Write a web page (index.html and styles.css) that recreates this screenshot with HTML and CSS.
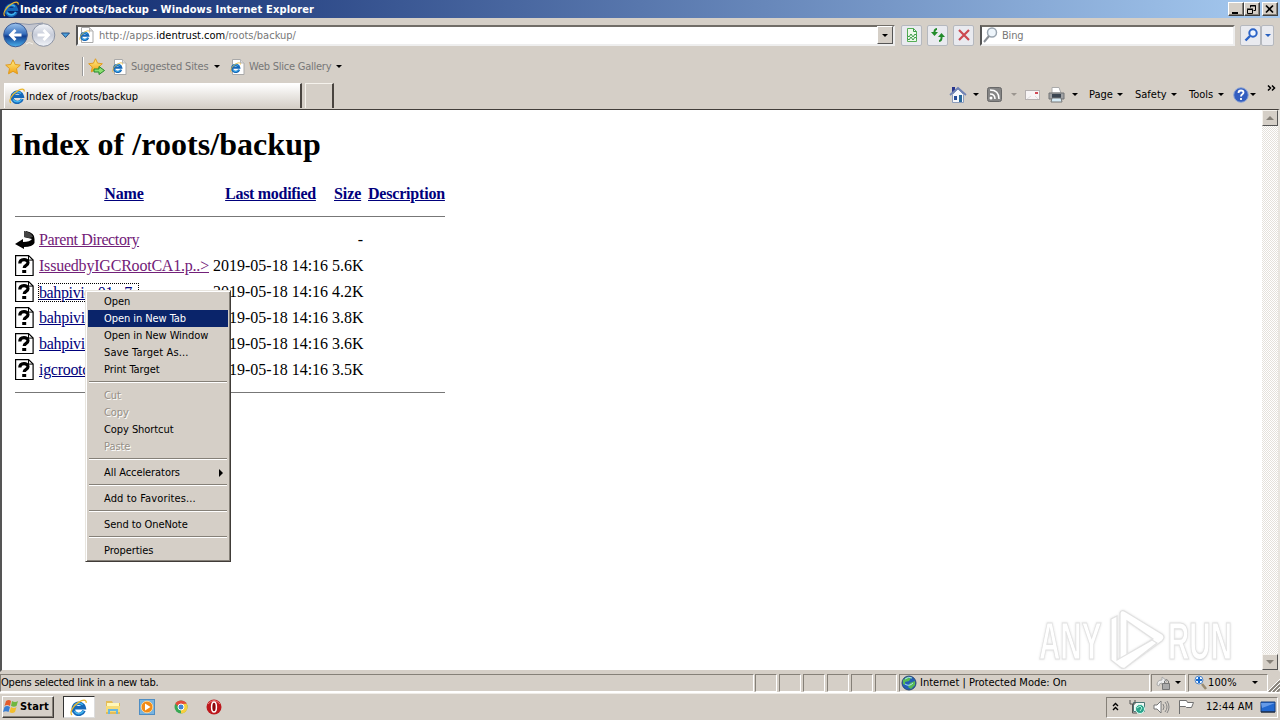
FILE: index.html
```html
<!DOCTYPE html>
<html lang="en">
<head>
<meta charset="utf-8">
<title>Index of /roots/backup</title>
<link rel="stylesheet" href="styles.css">
</head>
<body>
<svg class="defs" width="0" height="0" aria-hidden="true">
  <defs>
    <linearGradient id="blue" x1="0" y1="0" x2="0" y2="1"><stop offset="0" stop-color="#9cc4ee"/><stop offset=".45" stop-color="#3970bd"/><stop offset=".55" stop-color="#123f91"/><stop offset="1" stop-color="#4bb2ee"/></linearGradient>
    <linearGradient id="pale" x1="0" y1="0" x2="0" y2="1"><stop offset="0" stop-color="#f4f6fa"/><stop offset=".5" stop-color="#c6cbd8"/><stop offset="1" stop-color="#f2f5fa"/></linearGradient>
    <linearGradient id="gold" x1="0" y1="0" x2="0" y2="1"><stop offset="0" stop-color="#fff08a"/><stop offset="1" stop-color="#f2a010"/></linearGradient>
    <symbol id="ie" viewBox="0 0 16 16">
      <path d="M13.200 11A5.200 5.200 0 1 1 13.400 8.300H4.600" fill="none" stroke="#1668b8" stroke-width="3.300"/>
      <path d="M12.700 11A5 5 0 0 1 4 11.500M4 6.500a5 5 0 0 1 8-1" fill="none" stroke="#42b4ee" stroke-width="1.400"/>
      <path d="M1.800 15C-.8 12.400 3.200 6.200 8 3.200 12 .6 15.600.2 15.200 3.600" fill="none" stroke="#e9b52c" stroke-width="1.200"/>
    </symbol>
    <symbol id="iepage" viewBox="0 0 15 16">
      <path d="M2.500.5h8l3.500 3.500v11.500H2.500z" fill="#fff" stroke="#a9a9a9"/><path d="M10.500.5V4H14" fill="#ddd" stroke="#b5b5b5"/>
      <use href="#ie" x="0" y="3" width="11" height="11"/>
    </symbol>
    <symbol id="star" viewBox="0 0 16 16"><path d="M8 .8l2.200 4.700 5.100.6-3.800 3.500 1 5.200L8 12.300l-4.500 2.500 1-5.200L.7 6.100l5.100-.6z" fill="url(#gold)" stroke="#e09a1c"/></symbol>
    <symbol id="unk" viewBox="0 0 20 22">
      <path d="M.6 .6h13l4.500 4.500V20.500H.6z" fill="#fff" stroke="#000" stroke-width="1.200"/><path d="M13.500 .6v4.500h4.500" fill="none" stroke="#000"/>
      <path d="M4.800 8.500C4.800 3.500 13 3.500 13 7.800c0 2.700-3.800 2.500-3.800 5.200" fill="none" stroke="#000" stroke-width="3.200"/><path d="M7.200 15h4v3h-4z"/>
    </symbol>
  </defs>
</svg>

<div class="window">
  <header class="titlebar">
    <svg class="title-icon" width="16" height="16"><use href="#ie"/></svg>
    <span class="title-text">Index of /roots/backup - Windows Internet Explorer</span>
    <span class="winbtn"><svg width="12" height="11"><path d="M2 9h6" stroke="#000" stroke-width="2"/></svg></span>
    <span class="winbtn"><svg width="12" height="11"><path d="M4.500 3.500V1.500h5v5h-2M4 2h6M1.500 5.500h5v4h-5zM1 5h6" fill="none" stroke="#000"/></svg></span>
    <span class="winbtn close"><svg width="12" height="11"><path d="M2 1.500l7 7m0-7l-7 7" stroke="#000" stroke-width="1.700"/></svg></span>
  </header>

  <div class="navrow">
    <svg class="navbtns" width="74" height="30" viewBox="0 0 74 30">
      <path d="M15 3.500Q29 6 43 3.500V12H15z" fill="#c3c6d0"/><path d="M15 3Q29 6 43 3" stroke="#9099ae" fill="none"/><path d="M26 24q3-3 7 0" stroke="#f4f2ee" fill="none"/>
      <circle cx="15.500" cy="15" r="11.800" fill="url(#blue)" stroke="#3e5c94"/><path d="M21.500 15H11m4.500-5l-5 5 5 5" stroke="#fff" stroke-width="2.800" fill="none"/>
      <circle cx="43.500" cy="15" r="11.300" fill="url(#pale)" stroke="#8c93a3"/><path d="M37.500 15H48m-4.500-5l5 5-5 5" stroke="#fff" stroke-width="2.800" fill="none"/>
      <path d="M61.500 13h8l-4 4.500z" fill="#4da0da" stroke="#234e85"/>
    </svg>
    <div class="address"><svg width="15" height="16"><use href="#iepage"/></svg><span class="url">http://apps.<b>identrust.com</b>/roots/backup/</span><span class="drop"><i class="tri"></i></span></div>
    <span class="tool"><svg width="16" height="16"><path d="M3.500 1.500h6l3 3v10h-9z" fill="#edf8ea" stroke="#55ad55"/><path d="M9.500 1.500v3h3M3 8l2 2 2-3 2 3 2-3 2 2M3 11l2 2 2-3 2 3 2-3 2 2" fill="none" stroke="#3b9b46"/></svg></span>
    <span class="tool"><svg width="16" height="16"><path d="M7 2Q4 2 4.500 7M9 14q3 0 2.500-5" fill="none" stroke="#228b2a" stroke-width="2"/><path d="M1 5h7l-3.500 4zM8 10h7l-3.500-4z" fill="#228b2a"/></svg></span>
    <span class="tool"><svg width="16" height="16"><path d="M3 3l10 10m0-10L3 13" stroke="#cc4850" stroke-width="2.200"/></svg></span>
    <div class="search"><svg width="17" height="18"><circle cx="10" cy="6.500" r="4.500" fill="#eef5fb" stroke="#9aa5b0" stroke-width="1.500"/><path d="M7 10l-5 6" stroke="#8a8f96" stroke-width="2"/></svg><span class="bing">Bing</span></div>
    <span class="tool go"><svg width="16" height="16"><circle cx="10" cy="6" r="3.700" fill="#f0f6ff" stroke="#2b63c7" stroke-width="2"/><path d="M7 9l-4.500 4.500" stroke="#2b63c7" stroke-width="2.400"/></svg></span>
    <span class="tool more"><i class="tri bluetri"></i></span>
  </div>

  <div class="favrow">
    <svg width="16" height="16"><use href="#star"/></svg><span class="t fav">Favorites</span><i class="vsep"></i>
    <svg width="18" height="17" viewBox="0 0 18 17"><use href="#star" width="15" height="15"/><path d="M6 11h5V8.500l5.500 4-5.500 4V14H6z" fill="#8ade70" stroke="#258a2a"/></svg>
    <svg class="sp1" width="15" height="16"><use href="#iepage"/></svg><span class="t g sug">Suggested Sites</span><i class="tri"></i>
    <svg class="sp2" width="15" height="16"><use href="#iepage"/></svg><span class="t g web">Web Slice Gallery</span><i class="tri"></i>
  </div>

  <div class="tabrow">
    <div class="tab"><svg width="16" height="16"><use href="#ie"/></svg><span class="t tabt">Index of /roots/backup</span></div>
    <div class="newtab"></div>
    <div class="commands">
      <svg width="18" height="18"><path d="M3.500 8.500v8h11v-8L9 3z" fill="#f6f7fb" stroke="#8d9cba"/><path d="M3 1h3v5H3z" fill="#27348c"/><path d="M1 9l8-7 8 7" fill="none" stroke="#6f82b5" stroke-width="1.700"/><path d="M5 10h3v4H5z" fill="#274d99"/><path d="M10 9h3v7h-3z" fill="#2a6a9c"/></svg><i class="tri a1"></i>
      <svg class="rss" width="15" height="15"><rect x=".5" y=".5" width="14" height="14" rx="2" fill="#858585" stroke="#686868"/><path d="M3 7q5 0 5 5M3 3q9 0 9 9" fill="none" stroke="#fff" stroke-width="1.500"/><circle cx="4" cy="11" r="1.500" fill="#fff"/></svg><i class="tri a2"></i>
      <svg class="mail" width="15" height="12"><rect x=".5" y="1.500" width="14" height="9" fill="#f7f4f5" stroke="#b5b0b0"/><path d="M2 10l4-3M13 10l-3-3" stroke="#ddd"/><path d="M10 3h3v2h-3z" fill="#d14956"/></svg>
      <svg class="print" width="17" height="16"><path d="M4 6V.5h7l2 5.500z" fill="#fff" stroke="#aaa"/><path d="M1 6h15v6H1z" fill="#a0a2a5" stroke="#707274"/><path d="M4 7h9v4H4z" fill="#3c4652"/><path d="M4 11h9l1 4H3z" fill="#d7edf8" stroke="#777"/></svg><i class="tri a3"></i>
      <span class="t page">Page</span><i class="tri a4"></i><span class="t safety">Safety</span><i class="tri a5"></i><span class="t tools">Tools</span><i class="tri a6"></i>
      <svg class="help" width="16" height="16"><circle cx="8" cy="8" r="7.300" fill="#335ec0" stroke="#91a7d5"/><path d="M5.500 6c0-3.500 5-3 5-.5C10.500 7.500 8 7 8 9.500M8 11v2" fill="none" stroke="#fff" stroke-width="1.800"/></svg><i class="tri a7"></i>
      <svg class="chev" width="9" height="7"><path d="M1 .5l2.500 2.500L1 5.500M5 .5l2.500 2.500L5 5.500" fill="none" stroke="#000" stroke-width="1.500"/></svg>
    </div>
  </div>

  <div class="viewport">
    <main class="doc">
      <h1>Index of /roots/backup</h1>
      <div class="row head"><span></span><a>Name</a><a class="modified">Last modified</a><a>Size</a><a class="desc">Description</a></div>
      <hr>
      <div class="row"><svg width="20" height="22"><path d="M9 2l2 1 0-1q9 2 8.500 8v4q-2 4-10.500 4v2L0 15l8-5v3q7 0 9-3l-8-2z"/><path d="M9 2q7 1 9 6l-4 1-5-1z" fill="#444"/></svg><a class="visited parent">Parent Directory</a><span></span><span class="size">-</span></div>
      <div class="row"><svg width="20" height="22"><use href="#unk"/></svg><a class="visited issued">IssuedbyIGCRootCA1.p..&gt;</a><span>2019-05-18 14:16</span><span class="size">5.6K</span></div>
      <div class="row"><svg width="20" height="22"><use href="#unk"/></svg><a class="focus">bahpivica01.p7c</a><span>2019-05-18 14:16</span><span class="size">4.2K</span></div>
      <div class="row"><svg width="20" height="22"><use href="#unk"/></svg><a>bahpivic</a><span>2019-05-18 14:16</span><span class="size">3.8K</span></div>
      <div class="row"><svg width="20" height="22"><use href="#unk"/></svg><a>bahpivic</a><span>2019-05-18 14:16</span><span class="size">3.6K</span></div>
      <div class="row"><svg width="20" height="22"><use href="#unk"/></svg><a>igcrootc</a><span>2019-05-18 14:16</span><span class="size">3.5K</span></div>
      <hr class="last">
    </main>
    <div class="scroll"><span><i class="up"></i></span><span><i class="up down"></i></span></div>
  </div>

  <footer class="status">
    <span class="cell message"><span class="t opens">Opens selected link in a new tab.</span></span>
    <i class="cell small"></i><i class="cell small"></i><i class="cell small"></i><i class="cell small"></i><i class="cell small"></i><i class="cell small"></i>
    <span class="cell zone"><svg width="16" height="16"><circle cx="8" cy="8" r="7" fill="#235fb5" stroke="#2b4c73"/><path d="M2 5l4-3 4 1-2 3-4 1v3L2 9zm7 3l5-2v4l-4 4-3-2z" fill="#58bb55"/><path d="M4 4q4-3 7-1M4 9q4 3 8-1" stroke="#a8e2f4" fill="none"/></svg><span class="t inet">Internet | Protected Mode: On</span></span>
    <span class="cell lock"><svg width="18" height="16"><path d="M2 10q0-5 5-5V2l5 4-5 4V8q-3 0-3 3z" fill="#eee" stroke="#aaa"/><path d="M9.500 8v-2q2-3 4 0v3" fill="none" stroke="#777"/><path d="M7.500 8.500h7v6h-7z" fill="#aaa" stroke="#777"/></svg><i class="tri"></i></span>
    <span class="cell zoom"><svg width="13" height="15"><circle cx="5" cy="5" r="4" fill="#edf6ff" stroke="#5488c8"/><path d="M5 2v6M2 5h6" stroke="#176bd0" stroke-width="2"/><path d="M8 9l4 5" stroke="#998b72" stroke-width="2.500"/></svg><span class="t pct">100%</span><i class="tri"></i></span>
    <svg class="grip" width="13" height="13"><path d="M2 13L13 2M6 13l7-7M10 13l3-3" stroke="#858078" stroke-width="1.800"/><path d="M0 13L13 0M4 13l9-9M8 13l5-5" stroke="#fff"/></svg>
  </footer>

  <div class="taskbar">
    <span class="start"><svg width="17" height="16"><path d="M3 2q3-2 5 0L7 7Q4 5 1.500 7z" fill="#e45c2b"/><path d="M9 2q3 2 6 0l-1.500 5Q11 8.500 8 7z" fill="#70b740"/><path d="M1.500 8Q4 6 7 8l-1.500 5Q3 11.500 0 13z" fill="#397ed3"/><path d="M8 8q3 2 5.500 0L12 13q-3 2-5.500 0z" fill="#f2be2e"/></svg><b>Start</b></span>
    <span class="active"><svg width="18" height="17"><use href="#ie" width="17" height="17"/></svg></span>
    <svg class="folder" width="16" height="16"><path d="M1 2h6l1 2h7v11H1z" fill="#e4bc57"/><path d="M2 4h12v4H2z" fill="#fff7b9"/><path d="M1 7h14v6H1z" fill="#f6dc79"/><path d="M3 15v-5h10v5h-2v-3H5v3z" fill="#68b7df"/></svg>
    <svg class="media" width="16" height="16"><rect x=".5" y=".5" width="15" height="15" fill="#78b4e0" stroke="#4e8dc3"/><circle cx="8" cy="8" r="5.800" fill="#f18b17" stroke="#ffd18e"/><path d="M6 4.500v7L11.500 8z" fill="#fff"/></svg>
    <svg class="chrome" width="14" height="14"><circle cx="7" cy="7" r="6.500" fill="#39a853"/><path d="M1.400 3.700A6.500 6.500 0 0 1 12.600 3.700L7 7z" fill="#e54b3b"/><path d="M12.600 3.700A6.500 6.500 0 0 1 7 13.500L7 4z" fill="#f8cf3e"/><path d="M1.400 3.700L7 9V4z" fill="#e54b3b"/><circle cx="7" cy="7" r="3" fill="#4285d4" stroke="#fff"/></svg>
    <svg class="opera" width="16" height="16"><circle cx="8" cy="8" r="7.500" fill="#bd171c"/><path d="M2 5q6-7 12 0" stroke="#ef7775" fill="none"/><ellipse cx="8" cy="8" rx="2.400" ry="5" fill="#8d080b" stroke="#fff" stroke-width="1.500"/></svg>
    <div class="tray">
      <svg width="7" height="10"><path d="M1 4l2.500-2.500L6 4M1 8l2.500-2.500L6 8" fill="none" stroke="#000" stroke-width="1.400"/></svg>
      <svg class="net" width="17" height="16"><path d="M4.500 3.500h11v9h-11z" fill="#f3f8f5" stroke="#4c7775"/><path d="M1 1v4h5V1M3.500 5v9H8" fill="none" stroke="#555"/><circle cx="11" cy="10" r="4.500" fill="#2aa38b" stroke="#dcfff4"/><path d="M8 9l3-2 2 2-2 3" fill="none" stroke="#b3f0d8"/></svg>
      <svg class="sound" width="17" height="14"><path d="M1 5h3l4-4v12l-4-4H1z" fill="#fff" stroke="#777"/><path d="M10 4q2 3 0 6M12 2q4 5 0 10M14 1q4 6 0 12" fill="none" stroke="#858585"/></svg>
      <svg class="flag" width="17" height="16"><path d="M1.500 15V1.500h7l1 2h6l-2 5h-5l-1-1H2" fill="#fff" stroke="#707070"/></svg>
      <span class="t clock">12:44 AM</span>
      <svg class="desktop" width="16" height="14"><path d="M1 2h14v10H1z" fill="#2268cf" stroke="#173f7e"/><path d="M1 3h14L2 8z" fill="#659ae7"/><path d="M1 12h14" stroke="#222"/></svg>
    </div>
  </div>

  <nav class="menu">
    <div>Open</div><div class="selected">Open in New Tab</div><div>Open in New Window</div><div class="dots">Save Target As...</div><div>Print Target</div><hr>
    <div class="disabled">Cut</div><div class="disabled">Copy</div><div>Copy Shortcut</div><div class="disabled">Paste</div><hr>
    <div class="sub">All Accelerators<i></i></div><hr><div class="dots">Add to Favorites...</div><hr><div>Send to OneNote</div><hr><div>Properties</div>
  </nav>

  <svg class="watermark" width="220" height="70" viewBox="1030 605 220 70">
    <g fill="#fff" stroke="#e2e2e2" stroke-width="1.200">
      <text transform="translate(1039 659) scale(.58 1)">ANY</text>
      <text transform="translate(1168 659) scale(.58 1)">RUN</text>
      <path fill-rule="evenodd" d="M1120 613q1-4 6-1l36 22q4 3 0 7l-36 26q-6 3-6-2zM1127 621v34l26-16z"/>
      <path d="M1111 619l6-3v44l35-20 5 3-32 25q-3 1-5-1l-9-7z"/>
    </g>
  </svg>
</div>
</body>
</html>
```

FILE: styles.css
```css
* { box-sizing: border-box; }
body { margin: 0; width: 1280px; height: 720px; overflow: hidden; background: #d5cfc7; font: 11px/14px "DejaVu Sans Condensed", "DejaVu Sans", sans-serif; color: #000; }
svg { display: block; flex: none; }
.defs { position: absolute; }
.window { position: relative; display: flex; flex-direction: column; width: 1280px; height: 720px; }
.t, .url, .bing, .title-text { white-space: nowrap; flex: none; }
.tri { flex: none; width: 0; height: 0; border: 3px solid transparent; border-top-color: #000; border-bottom: 0; }
.titlebar { height: 18px; flex: none; display: flex; align-items: center; padding: 0 2px 0 3px; background: linear-gradient(90deg, #0a246a, #a6caf0); color: #fff; }
.title-text { margin-left: 1px; margin-right: auto; padding-top: 1px; font-weight: bold; letter-spacing: .16px; }
.winbtn { width: 16px; height: 14px; background: #d5cfc7; border: 1px solid; border-color: #fff #404040 #404040 #fff; box-shadow: inset -1px -1px #858078; display: block; padding: 1px; }
.close { margin-left: 2px; }
.navrow { height: 34px; flex: none; display: flex; align-items: center; }
.navbtns { margin-right: 2px; }
.address { width: 819px; height: 21px; border: 2px solid; border-color: #716d67 #eee #eee #555; background: #fff; display: flex; align-items: center; padding-left: 1px; }
.url { margin: 2px auto 0 5px; color: #777; letter-spacing: 0; }
.url b { color: #000; font-weight: normal; }
.drop { width: 16px; height: 18px; background: #d5cfc7; border: 1px solid; border-color: #fff #555 #555 #fff; display: flex; align-items: center; justify-content: center; }
.tool { margin-left: 5px; width: 21px; height: 21px; flex: none; display: flex; align-items: center; justify-content: center; border: 1px solid #b5b8be; border-radius: 2px; background: #e9eaef; }
.address + .tool { margin-left: 6px; }
.search { width: 255px; height: 21px; margin-left: 6px; border: 2px solid; border-color: #716d67 #eee #eee #555; background: #fff; display: flex; align-items: center; }
.bing { color: #777; margin: 2px 0 0 3px; letter-spacing: -.2px; }
.more { width: 13px; margin-left: 0; }
.bluetri { border-top-color: #2861c0; }
.favrow { height: 29px; flex: none; display: flex; align-items: center; padding-left: 5px; }
.fav { margin-left: 3px; width: 58px; letter-spacing: .1px; }
.vsep { width: 2px; height: 19px; background: #999; border-right: 1px solid #fff; margin-right: 4px; }
.g { color: #777; }
.sp1 { margin-left: 6px; } .sug { margin-left: 4px; width: 83px; letter-spacing: -.17px; padding-top: 1px; }
.sp2 { margin-left: 10px; } .web { margin-left: 4px; width: 87px; letter-spacing: -.24px; padding-top: 1px; }
.tabrow { height: 28px; flex: none; display: flex; padding: 2px 0 0 4px; }
.tab { width: 298px; height: 25px; background: linear-gradient(#fff, #e9e6e2 50%, #d5cfc7); border-right: 2px solid #49443f; border-top: 1px solid #fff; border-left: 1px solid #fff; display: flex; align-items: center; padding-left: 4px; }
.tabt { margin-left: 1px; padding-top: 1px; letter-spacing: .08px; }
.newtab { margin-left: 3px; width: 29px; height: 25px; border: 1px solid #f5f2ec; border-right: 2px solid #49443f; border-bottom: 0; }
.commands { margin-left: auto; display: flex; align-items: center; height: 23px; width: 331px; flex: none; }
.a1 { margin-left: 6px; } .rss { margin-left: 8px; } .a2 { margin-left: 9px; border-top-color: #9b9690; }
.mail { margin-left: 8px; } .print { margin-left: 8px; } .a3 { margin-left: 7px; }
.page { margin-left: 11px; width: 28px; } .safety { margin-left: 12px; width: 36px; } .tools { margin-left: 12px; width: 29px; }
.help { margin-left: 9px; } .a7 { margin-left: 1px; } .chev { margin: -13px 0 0 11px; }
.viewport { height: 563px; flex: none; display: flex; background: #fff; border: 2px solid; border-top: 1px solid #423e3a; border-color: #423e3a #e8e5df #d5cfc7 #555; }
.doc { flex: 1; padding: 15px 0 0 10px; font-family: "Liberation Serif", serif; font-size: 16px; line-height: 20px; }
h1 { margin: 0 0 0 -1px; font-size: 32px; line-height: 38px; letter-spacing: .05px; }
.row { display: grid; grid-template-columns: 24px 174px 119px 36px 80px; height: 26px; align-items: center; margin-left: 3px; white-space: nowrap; }
.row a { color: #00007c; text-decoration: underline; justify-self: start; letter-spacing: -.3px; }
.head { margin-top: 20px; height: 22px; font-weight: bold; }
.row.head a { letter-spacing: -.1px; }
.head a:nth-child(2), .head a:nth-child(3) { justify-self: center; }
.head a:nth-child(2) { margin-right: 4px; } .head a:nth-child(3) { margin-right: 4px; }
.row.head .modified { letter-spacing: -.3px; }
.row.head .desc { letter-spacing: -.2px; }
.head a:nth-child(4) { margin-left: 2px; }
.doc hr { width: 430px; height: 1px; margin: 11px 0 10px 3px; border: 0; background: #777; }
.doc hr.last { margin-top: 9px; }
.row .visited { color: #722078; }
.row .parent { letter-spacing: -.38px; }
.row .issued { letter-spacing: -.21px; }
.size { text-align: right; width: 31px; }
.row .focus { outline: 1px dotted #000; width: 99px; height: 17px; line-height: 17px; letter-spacing: -.38px; }
.scroll { width: 16px; display: flex; flex-direction: column; justify-content: space-between; background: repeating-conic-gradient(#fff 0 25%, #e5e1db 0 50%) 0 0 / 2px 2px; }
.scroll span { height: 16px; background: #d5cfc7; border: 1px solid; border-color: #f5f2ed #555 #555 #f5f2ed; display: flex; align-items: center; justify-content: center; }
.up { border: 4px solid transparent; border-bottom-color: #858078; border-top: 0; }
.down { transform: rotate(180deg); }
.status { height: 21px; flex: none; display: flex; align-items: center; padding-top: 1px; border-bottom: 1px solid #fff; }
.cell { height: 18px; border: 1px solid; border-color: #858078 #fff #fff #858078; display: flex; align-items: center; flex: none; }
.cell .t { padding-top: 1px; }
.message { width: 754px; margin-right: 1px; }
.opens { letter-spacing: -.22px; }
.small { width: 22px; margin-right: 2px; }
.zone { width: 251px; } .zone svg { margin: 0 3px 0 1px; }
.lock { width: 35px; margin-left: 1px; padding-left: 3px; } .lock .tri { margin-left: 2px; }
.zoom { width: 80px; margin-left: 2px; padding-left: 5px; } .pct { margin-left: 1px; width: 44px; letter-spacing: .1px; }
.grip { margin: 5px 0 0 -1px; }
.taskbar { height: 28px; flex: none; border-top: 1px solid #f0ede8; display: flex; align-items: center; padding: 0 2px 1px; }
.start { width: 52px; height: 22px; border: 1px solid; border-color: #fff #403c38 #403c38 #fff; box-shadow: inset -1px -1px #858078; display: flex; align-items: center; }
.start b { margin-left: 0; letter-spacing: .15px; }
.active { margin-left: 9px; width: 32px; height: 22px; border: 1px solid; border-color: #333 #ddd #ddd #333; background: #fff; display: flex; align-items: center; justify-content: center; }
.folder { margin-left: 10px; } .media { margin-left: 18px; } .chrome { margin-left: 19px; } .opera { margin-left: 18px; }
.tray { margin-left: auto; width: 172px; height: 21px; border: 1px solid; border-color: #858078 #fff #fff #858078; display: flex; align-items: center; padding-left: 5px; }
.net { margin-left: 10px; } .sound { margin-left: 7px; } .flag { margin-left: 8px; } .clock { margin-left: 11px; width: 50px; } .desktop { margin-left: 4px; }
.menu { position: absolute; left: 85px; top: 290px; width: 146px; height: 272px; padding: 2px; border: 1px solid; border-color: #e8e5df #403c38 #403c38 #e8e5df; background: #d5cfc7; box-shadow: inset 1px 1px #fff, inset -1px -1px #858078; }
.menu div { height: 17px; line-height: 17px; padding-left: 16px; display: flex; align-items: center; white-space: nowrap; letter-spacing: -.07px; }
.menu .dots { letter-spacing: .13px; }
.menu .selected { background: #0a246a; color: #fff; }
.menu .disabled { color: #969087; text-shadow: 1px 1px #fff; }
.menu hr { margin: 3px 1px 4px; border: 0; height: 2px; background: linear-gradient(#858078 50%, #fff 50%); }
.sub i { margin: 0 5px 0 auto; border: 4px solid transparent; border-left-color: #000; border-right: 0; }
.watermark { position: absolute; left: 1030px; top: 605px; overflow: visible; font: bold 51px "Liberation Sans", sans-serif; filter: drop-shadow(0 0 1px #e2e2e2); }
```
